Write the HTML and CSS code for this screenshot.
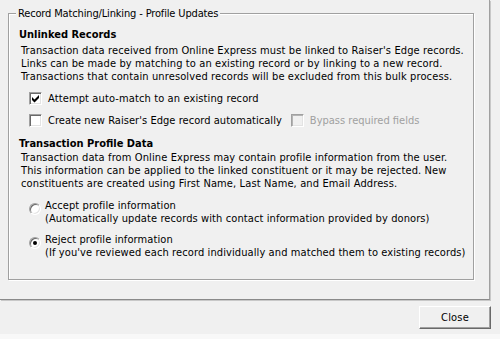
FILE: index.html
```html
<!DOCTYPE html>
<html>
<head>
<meta charset="utf-8">
<link rel="stylesheet" href="styles.css">
</head>
<body>
<div class="dialog">
  <div class="panel">
    <fieldset class="group">
      <legend>Record Matching/Linking - Profile Updates</legend>
      <h2 class="section-title">Unlinked Records</h2>
      <p class="desc">Transaction data received from Online Express must be linked to Raiser's Edge records.<br>Links can be made by matching to an existing record or by linking to a new record.<br>Transactions that contain unresolved records will be excluded from this bulk process.</p>
      <div class="options">
        <div class="check-row">
          <label class="check"><span class="cb"><svg width="11" height="11" viewBox="0 0 11 11"><path d="M2 4 L4.5 6.5 L9 2 L9 5 L4.5 9.5 L2 7 Z" fill="#000"/></svg></span>Attempt auto-match to an existing record</label>
        </div>
        <div class="check-row">
          <label class="check"><span class="cb"></span>Create new Raiser's Edge record automatically</label>
          <label class="check disabled"><span class="cb"></span>Bypass required fields</label>
        </div>
      </div>
      <h2 class="section-title second">Transaction Profile Data</h2>
      <p class="desc second">Transaction data from Online Express may contain profile information from the user.<br>This information can be applied to the linked constituent or it may be rejected. New<br>constituents are created using First Name, Last Name, and Email Address.</p>
      <div class="radios">
        <label class="radio-row"><span class="rb"></span><span class="radio-text">Accept profile information<br>(Automatically update records with contact information provided by donors)</span></label>
        <label class="radio-row"><span class="rb on"><span class="dot"></span></span><span class="radio-text">Reject profile information<br>(If you've reviewed each record individually and matched them to existing records)</span></label>
      </div>
    </fieldset>
  </div>
  <div class="footer">
    <button class="btn">Close</button>
  </div>
  <div class="bottom-strip"></div>
</div>
</body>
</html>
```

FILE: styles.css
```css
body {
  margin: 0;
  background: #f0f0f0;
  font-family: "DejaVu Sans Condensed", "DejaVu Sans", "Liberation Sans", sans-serif;
  font-size: 11px;
  letter-spacing: 0.12px;
  line-height: 13px;
  color: #000;
}

.dialog {
  width: 500px;
  height: 339px;
  display: flex;
  flex-direction: column;
  overflow: hidden;
}

.panel {
  width: 490px;
  height: 300px;
  box-sizing: border-box;
  border-right: 1px solid #a0a0a0;
  border-bottom: 1px solid #8a8a8a;
  box-shadow: 1px 1px 0 #c8c8c8;
  padding: 7px 0 0 8px;
  flex: none;
}

.group {
  margin: 0;
  min-width: 0;
  width: 466px;
  height: 273px;
  box-sizing: border-box;
  padding: 0 0 0 10px;
  border: 1px solid #a0a0a0;
  box-shadow: 1px 1px 0 #fff, inset 1px 1px 0 #fff;
}

.group legend {
  padding: 0 2px;
  margin-left: -3px;
  background: #f0f0f0;
  line-height: 13px;
  letter-spacing: -0.15px;
}

.section-title {
  margin: 8px 0 0;
  font-size: inherit;
  font-weight: bold;
  line-height: 13px;
  letter-spacing: 0;
}

.section-title.second {
  margin-top: 10px;
}

.desc {
  margin: 3px 0 0 2px;
}

.desc.second {
  margin-top: 1px;
}

.options {
  margin-top: 9px;
  padding-left: 10px;
  display: flex;
  flex-direction: column;
  gap: 9px;
}

.check-row {
  display: flex;
  align-items: center;
  height: 13px;
}

.check {
  display: flex;
  align-items: center;
  gap: 6px;
}

.check-row:last-child .check:first-child {
  letter-spacing: 0.05px;
}

.check.disabled {
  margin-left: 9px;
  color: #a0a0a0;
  letter-spacing: 0;
}

.cb {
  width: 13px;
  height: 13px;
  box-sizing: border-box;
  flex: none;
  background: #fff;
  border: 1px solid;
  border-color: #a0a0a0 #fff #fff #a0a0a0;
  box-shadow: inset 1px 1px 0 #696969, inset -1px -1px 0 #e3e3e3;
  display: flex;
}

.check.disabled .cb {
  background: #f0f0f0;
  box-shadow: inset 1px 1px 0 #b4b4b4, inset -1px -1px 0 #e3e3e3;
}

.radios {
  margin-top: 9px;
  padding-left: 10px;
  display: flex;
  flex-direction: column;
  gap: 8px;
}

.radio-row {
  display: flex;
  align-items: flex-start;
  gap: 4px;
}

.radio-text {
  letter-spacing: 0.1px;
}

.rb {
  width: 12px;
  height: 12px;
  margin-top: 4px;
  box-sizing: border-box;
  flex: none;
  border-radius: 50%;
  background: #fff;
  border: 1px solid;
  border-color: #a0a0a0 #fff #fff #a0a0a0;
  box-shadow: inset 1px 1px 0 #696969, inset -1px -1px 0 #e3e3e3;
  display: flex;
  align-items: center;
  justify-content: center;
}

.rb .dot {
  width: 4px;
  height: 4px;
  border-radius: 50%;
  background: #000;
}

.footer {
  display: flex;
  justify-content: flex-end;
  padding: 6px 9px 0 0;
}

.btn {
  width: 72px;
  height: 23px;
  box-sizing: border-box;
  font: inherit;
  letter-spacing: 0.2px;
  color: #000;
  background: #f0f0f0;
  border: 1px solid;
  border-color: #fff #696969 #696969 #fff;
  box-shadow: inset -1px -1px 0 #a0a0a0;
  padding: 0;
}

.bottom-strip {
  margin-top: auto;
  height: 5px;
  background: #f8f8f8;
}
```
